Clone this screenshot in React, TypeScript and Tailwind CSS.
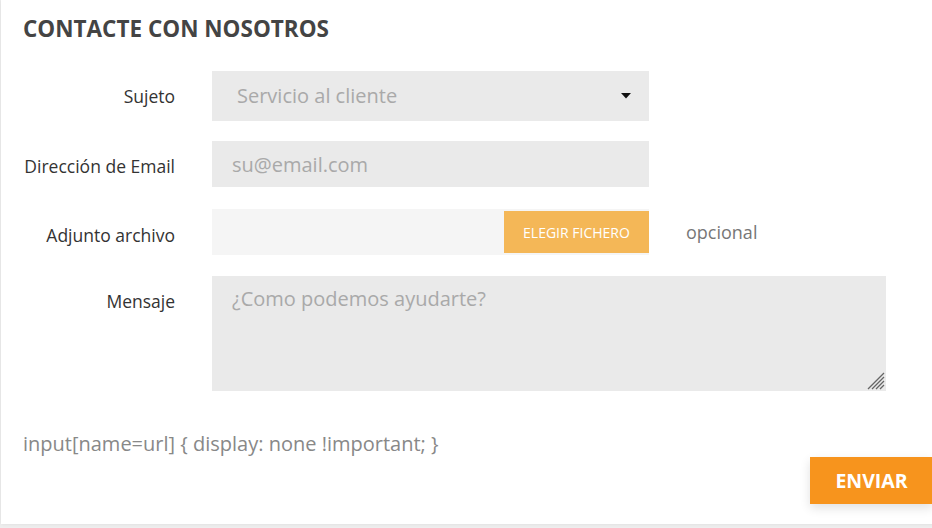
import React from 'react';

const labelCls = 'text-right text-[17.5px] text-[#333] leading-[24px]';

const App = () => {
    return (
        <div className="w-[932px] h-[528px] overflow-hidden bg-[#eeeeee] pl-px" style={{ fontFamily: '"Open Sans", "Liberation Sans", sans-serif' }}>
            <div className="relative h-[524px] w-[940px] bg-white shadow-[0_0_4px_rgba(0,0,0,0.08)]">
                <h2 className="pl-[22px] pt-[14px] text-[22.5px] font-bold leading-[30px] text-[#444]">CONTACTE CON NOSOTROS</h2>

                <div className="mt-[27px] grid grid-cols-[174px_1fr] gap-x-[37px] gap-y-0">
                    {/* sujeto */}
                    <div className={`${labelCls} self-center`}>Sujeto</div>
                    <div className="flex h-[50px] w-[437px] items-center justify-between bg-[#eaeaea] pl-[25px] pr-[18px]">
                        <span className="text-[20px] text-[#a9a9a9]">Servicio al cliente</span>
                        <svg width="10" height="6" viewBox="0 0 10 6"><path d="M0 0h10L5 5.5z" fill="#111" /></svg>
                    </div>

                    {/* email */}
                    <div className={`${labelCls} mt-[20px] self-center pt-[4px]`}>Dirección de Email</div>
                    <input
                        className="mt-[20px] h-[46px] w-[437px] bg-[#eaeaea] px-[20px] text-[20px] text-[#333] outline-none placeholder:text-[#a9a9a9]"
                        placeholder="su@email.com"
                    />

                    {/* adjunto */}
                    <div className={`${labelCls} mt-[22px] self-center pt-[5px]`}>Adjunto archivo</div>
                    <div className="mt-[22px] flex items-center">
                        <div className="flex h-[46px] w-[437px] items-center justify-end bg-[#f5f5f5]">
                            <button className="h-[42px] w-[145px] bg-[#f4b757] text-[14px] text-white">ELEGIR FICHERO</button>
                        </div>
                        <span className="ml-[37px] text-[18px] text-[#777]">opcional</span>
                    </div>

                    {/* mensaje */}
                    <div className={`${labelCls} mt-[21px] pt-[13px]`}>Mensaje</div>
                    <div className="relative mt-[21px] h-[115px] w-[674px] bg-[#eaeaea]">
                        <textarea
                            className="h-full w-full resize-none bg-transparent px-[20px] pt-[10px] text-[20px] leading-[26px] text-[#333] outline-none placeholder:text-[#a9a9a9]"
                            placeholder="¿Como podemos ayudarte?"
                        />
                        <svg className="absolute bottom-[1px] right-[1px]" width="18" height="18" viewBox="0 0 18 18">
                            <path d="M17 1L1 17M17 5L5 17M17 9L9 17M17 13L13 17" stroke="#666" strokeWidth="1.3" />
                        </svg>
                    </div>
                </div>

                <p className="mt-[40px] pl-[22px] text-[20px] leading-[26px] text-[#888]">input[name=url] {'{'} display: none !important; {'}'}</p>

                <div className="flex justify-end pr-[8px]">
                    <button className="h-[47px] w-[123px] bg-[#f7941d] text-[19.5px] font-bold text-white shadow-[0_4px_10px_rgba(0,0,0,0.12)]">ENVIAR</button>
                </div>
            </div>
        </div>
    );
};

export default App;
